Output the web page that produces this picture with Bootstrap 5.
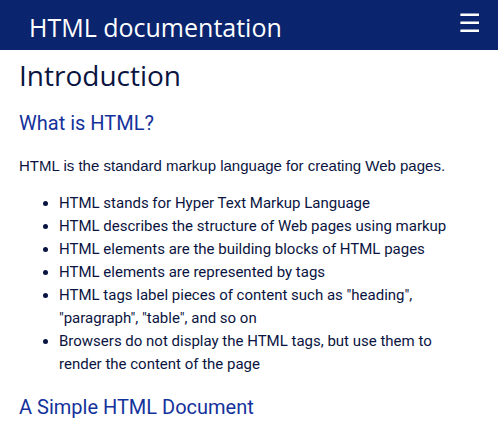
<!DOCTYPE html>
<html lang="en">
<head>
<meta charset="utf-8">
<meta name="viewport" content="width=device-width, initial-scale=1">
<title>HTML documentation</title>
<link href="https://cdn.jsdelivr.net/npm/bootstrap@5.3.0/dist/css/bootstrap.min.css" rel="stylesheet">
<style>
body { font-family: Roboto, sans-serif; font-size: 15px; line-height: 23px; color: #0a1441; }
.topbar { background: #0a246e; min-height: 50px; padding: 0 18px 0 29px; }
.site-title { font: 400 25px/34px "Open Sans", sans-serif; color: #fff; padding-top: 4px; }
.menu-btn { background: none; border: 0; padding: 0 0 4px; color: #fff; line-height: 0; }
.doc { padding: 7px 29px 0 19px; }
.doc h2 { font: 400 28px/36px "Open Sans", sans-serif; margin: 0 0 17px; }
.doc h3 { font: 400 20px/26px Roboto, sans-serif; color: #14329b; margin: 0; }
.intro { font: 400 15px/23px "Liberation Sans", sans-serif; margin: 18px 0 15px; }
.facts { padding-left: 40px; margin: 0 0 18px; }
</style>
</head>
<body>
<header class="topbar d-flex justify-content-between align-items-center">
<h1 class="site-title m-0">HTML documentation</h1>
<button class="menu-btn" type="button" aria-label="Menu"><svg width="20" height="20" viewBox="0 0 20 20" fill="currentColor"><path d="M.4 .6H19V3H.4zM.4 8.6H19V11H.4zM.4 16.6H19V19H.4z"/></svg></button>
</header>
<main class="doc">
<h2>Introduction</h2>
<h3>What is HTML?</h3>
<p class="intro">HTML is the standard markup language for creating Web pages.</p>
<ul class="facts">
<li>HTML stands for Hyper Text Markup Language</li>
<li>HTML describes the structure of Web pages using markup</li>
<li>HTML elements are the building blocks of HTML pages</li>
<li>HTML elements are represented by tags</li>
<li>HTML tags label pieces of content such as "heading", "paragraph", "table", and so on</li>
<li>Browsers do not display the HTML tags, but use them to render the content of the page</li>
</ul>
<h3>A Simple HTML Document</h3>
</main>
<script src="https://cdn.jsdelivr.net/npm/bootstrap@5.3.0/dist/js/bootstrap.bundle.min.js"></script>
</body>
</html>
